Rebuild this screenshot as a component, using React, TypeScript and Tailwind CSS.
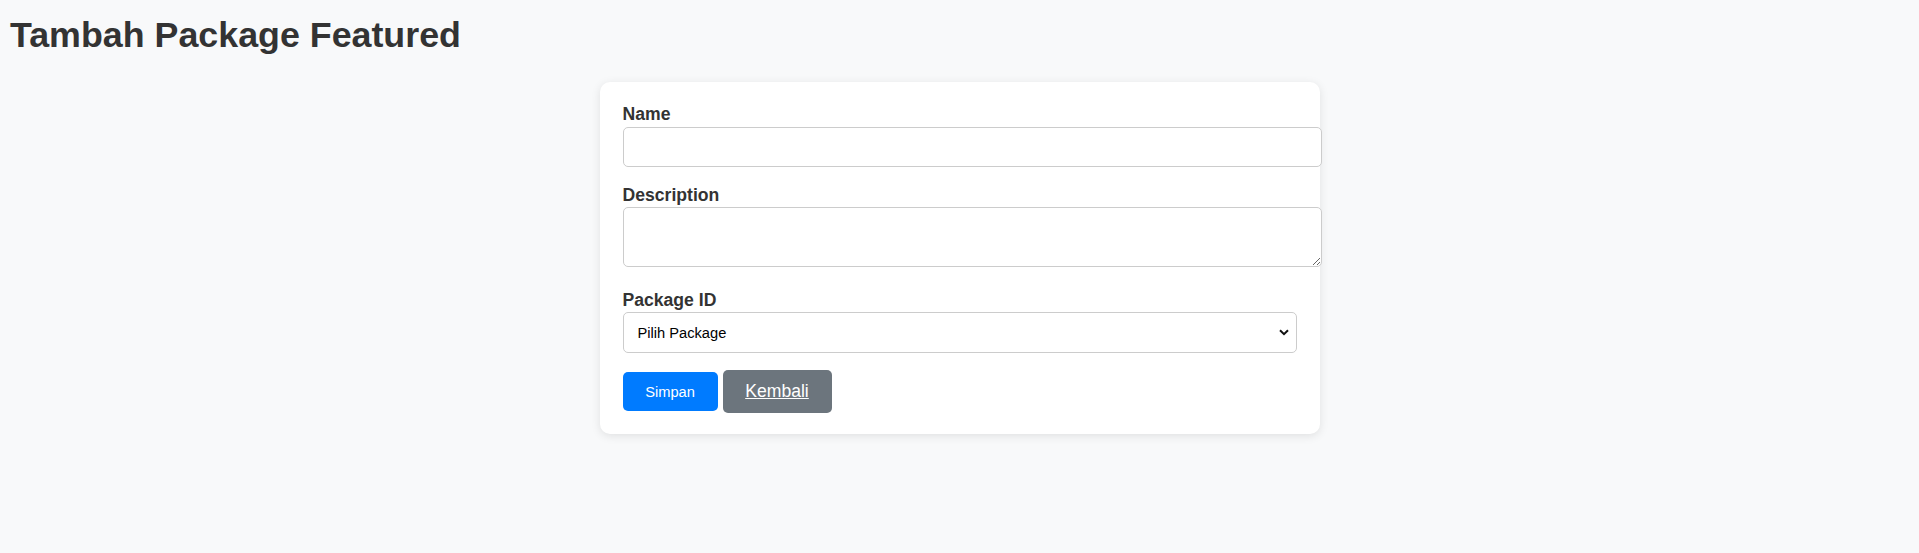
import React from "react";

export default function App() {
  return (
    <div className="min-h-screen bg-[#f8f9fa] font-['Liberation_Sans',Arial,sans-serif] text-[#333]">
      <h1 className="pl-[10px] pt-[14px] text-[35.8px] font-bold leading-[42px] text-[#333]">
        Tambah Package Featured
      </h1>
      <div className="mx-auto mt-[26px] w-[720px] rounded-[10px] bg-white px-[23px] pb-[21px] pt-[22px] shadow-[0_2px_10px_rgba(0,0,0,0.1)]">
        <form onSubmit={(e) => e.preventDefault()}>
          <label className="block text-[17.6px] font-bold leading-[20px] text-[#333]">Name</label>
          <input
            type="text"
            className="mt-[3px] block h-[40px] w-[699px] rounded-[5px] border border-[#ccc] bg-white px-[11px] text-[17.6px] outline-none"
          />
          <label className="mt-[18px] block text-[17.6px] font-bold leading-[20px] text-[#333]">Description</label>
          <textarea className="mt-[2px] block h-[60px] w-[699px] rounded-[5px] border border-[#ccc] bg-white px-[11px] text-[17.6px] outline-none" />
          <label className="mt-[23px] block text-[17.6px] font-bold leading-[20px] text-[#333]">Package ID</label>
          <div className="relative mt-[2px] w-full">
            <select
              className="block h-[41px] w-full appearance-none rounded-[5px] border border-[#ccc] bg-white pl-[14px] text-[14.67px] text-black outline-none"
              defaultValue=""
            >
              <option value="">Pilih Package</option>
            </select>
            <svg
              className="pointer-events-none absolute right-[8px] top-[17px]"
              width="10"
              height="7"
              viewBox="0 0 10 7"
            >
              <polyline points="1,1.2 5,5.2 9,1.2" fill="none" stroke="#111" strokeWidth="2" />
            </svg>
          </div>
          <div className="mt-[17px] flex items-center gap-[5px]">
            <button
              type="submit"
              className="h-[39px] w-[95px] rounded-[5px] bg-[#007bff] text-[14.67px] text-white"
            >
              Simpan
            </button>
            <a
              href="#"
              className="flex h-[43px] w-[109px] items-center justify-center rounded-[5px] bg-[#6c757d] text-[17.6px] text-white underline"
            >
              Kembali
            </a>
          </div>
        </form>
      </div>
    </div>
  );
}
